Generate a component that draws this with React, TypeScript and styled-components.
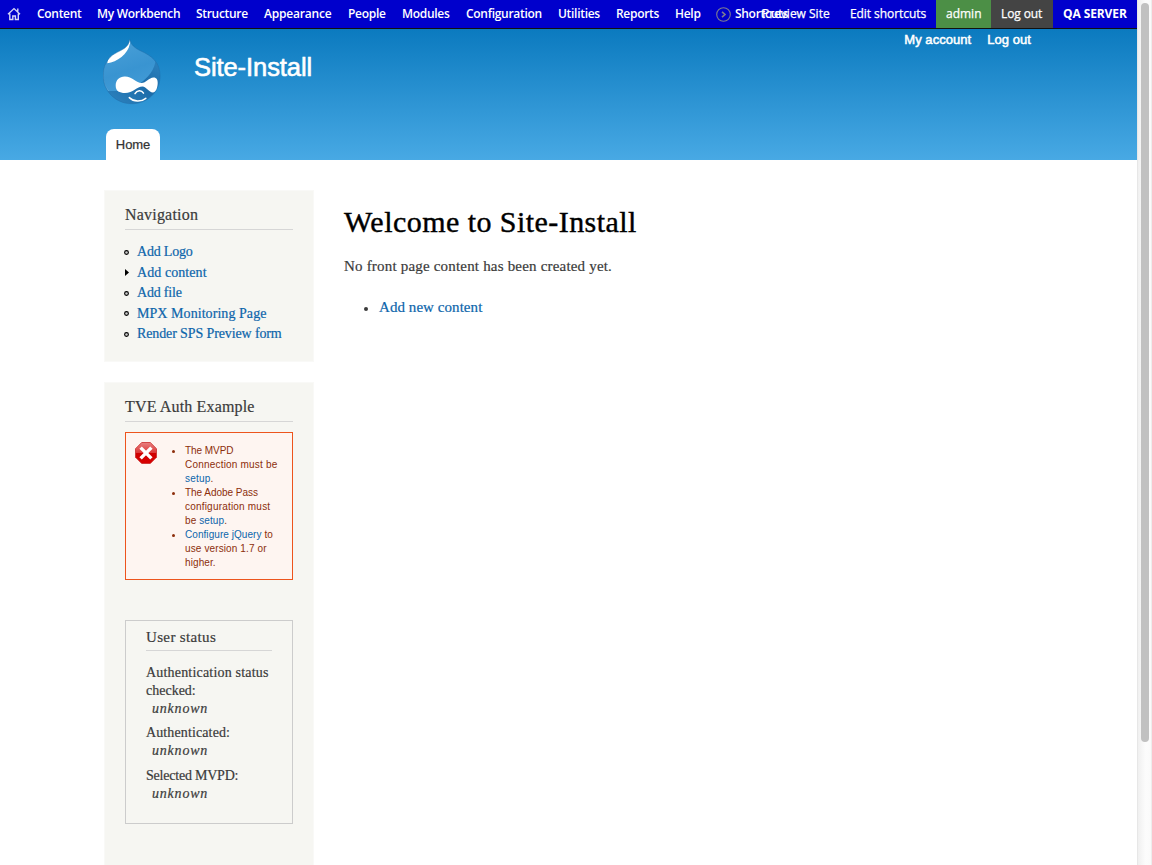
import React from "react";
import styled, { createGlobalStyle } from "styled-components";

const GlobalStyle = createGlobalStyle`
  *, *::before, *::after { box-sizing: border-box; }
  html, body { margin: 0; padding: 0; background: #fff; overflow: hidden; }
  body { font-family: "Liberation Serif", Georgia, serif; color: #3b3b3b; }
  a { color: #0d65ab; text-decoration: none; }
  h1, h2, h3, p, ul, dl, dd, dt { margin: 0; padding: 0; font-weight: normal; }
  ul { list-style: none; }
`;

const Window = styled.div`
  display: flex;
  width: 1152px;
  height: 865px;
  overflow: hidden;
`;

const Page = styled.div`
  width: 1137px;
  height: 865px;
  overflow: hidden;
`;

const ScrollTrack = styled.div`
  width: 15px;
  padding: 3px 3px 0 3px;
  border-left: 1px solid #e7e7e7;
  border-right: 1px solid #ededed;
  background: linear-gradient(to right, #f0f0f0, #fcfcfc 60%, #fafafa);
`;

const ScrollThumb = styled.div`
  width: 8px;
  height: 739px;
  border-radius: 4px;
  background: #c1c1c1;
`;

const Toolbar = styled.nav`
  display: flex;
  height: 29px;
  background: #0000cc;
  border-bottom: 1px solid #111;
  font: 600 12px/27px "Open Sans", sans-serif;
  white-space: nowrap;
`;

const HomeLink = styled.a`
  display: flex;
  flex: none;
  width: 29px;
  padding: 7px 0 0 7px;
`;

const MenuLink = styled.a<{ $w: number; $ls?: number }>`
  flex: none;
  width: ${(p) => p.$w}px;
  padding-left: 8px;
  color: #fff;
  letter-spacing: ${(p) => p.$ls ?? -0.3}px;
`;

const ShortcutToggle = styled.a`
  display: flex;
  flex: none;
  width: 42px;
  padding-left: 6px;
  gap: 4px;
  color: #fff;
  letter-spacing: -0.3px;
  svg { flex: none; margin-top: 7px; }
`;

const UserLink = styled.a<{ $w: number; $bg?: string; $strong?: boolean; $ls?: number }>`
  flex: none;
  width: ${(p) => p.$w}px;
  height: 28px;
  padding-left: 10px;
  color: #fff;
  background: ${(p) => p.$bg ?? "transparent"};
  font-weight: ${(p) => (p.$strong ? 700 : 500)};
  -webkit-text-stroke: ${(p) => (p.$strong ? 0 : 0.25)}px #fff;
  letter-spacing: ${(p) => p.$ls ?? 0}px;
`;

const Header = styled.header`
  height: 131px;
  padding: 0 106px 0 103px;
  display: grid;
  grid-template-columns: 91px 1fr auto;
  grid-template-rows: 100px 31px;
  background: linear-gradient(#0b7abf, #48a9e4);
  font-family: "Liberation Sans", Helvetica, sans-serif;
`;

const LogoLink = styled.a`
  padding-top: 10px;
`;

const SiteName = styled.h1`
  padding-top: 23px;
  font-size: 25.5px;
  line-height: 30px;
  letter-spacing: -0.08px;
  color: #fff;
  -webkit-text-stroke: 0.6px #fff;
`;

const AccountLinks = styled.div`
  display: flex;
  gap: 16px;
  padding-top: 3px;
  font-size: 13px;
  line-height: 16px;
  letter-spacing: 0.05px;
  a { color: #fff; -webkit-text-stroke: 0.5px #fff; }
`;

const HomeTab = styled.a`
  width: 54px;
  height: 31px;
  margin-left: 3px;
  border-radius: 8px 8px 0 0;
  background: #fff;
  color: #333;
  font-size: 13px;
  line-height: 31px;
  letter-spacing: -0.1px;
  text-align: center;
  text-shadow: 0 1px #eee;
  -webkit-text-stroke: 0.2px #333;
`;

const Main = styled.main`
  display: flex;
  padding: 30px 0 0 104px;
  -webkit-text-stroke: 0.2px;
`;

const Sidebar = styled.aside`
  display: flex;
  flex-direction: column;
  gap: 20px;
  width: 210px;
`;

const Block = styled.section<{ $h: number }>`
  height: ${(p) => p.$h}px;
  padding: 13px 20px 0;
  border: 1px solid #f9f9f7;
  background: #f6f6f2;
`;

const BlockTitle = styled.h2<{ $ls?: number }>`
  height: 26px;
  border-bottom: 1px solid #d6d6d6;
  font-size: 16px;
  line-height: 22px;
  letter-spacing: ${(p) => p.$ls ?? 0}px;
`;

const NavList = styled.ul`
  padding-top: 12px;
`;

const NavItem = styled.li`
  display: flex;
  align-items: center;
  gap: 8px;
  height: 20.5px;
  margin-left: -1px;
  svg { flex: none; }
`;

const NavLink = styled.a<{ $ls?: number }>`
  font-size: 14px;
  line-height: 20px;
  white-space: nowrap;
  letter-spacing: ${(p) => p.$ls ?? 0}px;
`;

const ErrorBox = styled.div`
  display: flex;
  height: 148px;
  margin-top: 10px;
  padding: 9px 0 0 9px;
  border: 1px solid #ed541d;
  background: #fef5f1;
  color: #8c2e0b;
  font-family: "Liberation Sans", Helvetica, sans-serif;
  -webkit-text-stroke: 0;
`;

const ErrorList = styled.ul`
  padding: 2px 0 0 28px;
`;

const ErrorItem = styled.li`
  position: relative;
  font-size: 10px;
  line-height: 14px;
  white-space: nowrap;
  &::before {
    content: "";
    position: absolute;
    left: -13px;
    top: 6px;
    width: 3px;
    height: 3px;
    border-radius: 50%;
    background: #8c2e0b;
  }
`;

const ErrorLine = styled.span<{ $ls?: number }>`
  display: block;
  letter-spacing: ${(p) => p.$ls ?? 0.2}px;
`;

const StatusBox = styled.div`
  height: 204px;
  margin-top: 40px;
  padding: 6px 20px 0;
  border: 1px solid #ccc;
`;

const StatusTitle = styled.h3`
  height: 24px;
  border-bottom: 1px solid #d6d6d6;
  font-size: 15px;
  line-height: 21px;
  letter-spacing: 0.35px;
`;

const StatusList = styled.dl`
  padding-top: 13px;
  font-size: 14px;
  line-height: 18px;
`;

const Term = styled.dt<{ $ls?: number }>`
  white-space: nowrap;
  letter-spacing: ${(p) => p.$ls ?? 0}px;
`;

const Value = styled.dd`
  margin: 0 0 6.4px 6px;
  font-style: italic;
  letter-spacing: 0.8px;
`;

const Content = styled.article`
  padding: 14px 0 0 30px;
`;

const PageTitle = styled.h1`
  color: #000;
  font-size: 30px;
  line-height: 36px;
  letter-spacing: 0.45px;
  -webkit-text-stroke: 0.4px #000;
`;

const Paragraph = styled.p`
  padding-top: 16px;
  font-size: 15px;
  line-height: 21px;
  letter-spacing: 0.19px;
`;

const ContentList = styled.ul`
  padding: 20px 0 0 20px;
`;

const ContentItem = styled.li`
  display: flex;
  align-items: center;
  gap: 11px;
  font-size: 15px;
  line-height: 21px;
  letter-spacing: 0.06px;
  &::before {
    content: "";
    width: 4px;
    height: 4px;
    margin-top: 2px;
    border-radius: 50%;
    background: #3b3b3b;
  }
`;

const menu: { label: string; w: number; ls?: number }[] = [
  { label: "Content", w: 60 },
  { label: "My Workbench", w: 99 },
  { label: "Structure", w: 68 },
  { label: "Appearance", w: 84, ls: -0.2 },
  { label: "People", w: 54 },
  { label: "Modules", w: 64 },
  { label: "Configuration", w: 92 },
  { label: "Utilities", w: 58 },
  { label: "Reports", w: 59 },
  { label: "Help", w: 43 },
];

const navigation: { label: string; expandable?: boolean; ls?: number }[] = [
  { label: "Add Logo", ls: -0.2 },
  { label: "Add content", expandable: true, ls: 0.07 },
  { label: "Add file", ls: -0.2 },
  { label: "MPX Monitoring Page", ls: 0.06 },
  { label: "Render SPS Preview form", ls: -0.12 },
];

const HomeIcon = () => (
  <svg width="14" height="14" viewBox="0 0 14 14" fill="none" stroke="#d5d5f5" strokeWidth="1.4">
    <path d="M1 7.3 7 1.6l6 5.7M2.8 6.5v6h3V9h2.6v3.5h2.9v-6M10.8 4.5V1.500" />
  </svg>
);

const ToggleIcon = () => (
  <svg width="15" height="15" viewBox="0 0 15 15" fill="none" stroke="#7c7c91">
    <circle cx="7.5" cy="7.5" r="6.8" strokeWidth="1.1" />
    <path d="m6 4.8 3 2.700-3 2.700" strokeWidth="1.6" />
  </svg>
);

const LeafIcon = () => (
  <svg width="5" height="5" viewBox="0 0 5 5">
    <circle cx="2.5" cy="2.5" r="1.9" fill="#ccc" stroke="#000" strokeWidth="1.1" />
  </svg>
);

const CollapsedIcon = () => (
  <svg width="5" height="7" viewBox="0 0 5 7">
    <path d="M1 0v7l4-3.5z" fill="#000" />
  </svg>
);

const ErrorIcon = () => (
  <svg width="22" height="22" viewBox="0 0 22 22">
    <defs>
      <linearGradient id="stop" x2="0" y2="1">
        <stop offset="0" stopColor="#e88080" />
        <stop offset=".48" stopColor="#dc3a3a" />
        <stop offset=".52" stopColor="#cf0000" />
        <stop offset="1" stopColor="#d80000" />
      </linearGradient>
    </defs>
    <path d="M6.700.5h8.600l6.200 6.200v8.600l-6.200 6.200H6.700L.5 15.300V6.700z" fill="url(#stop)" stroke="#c92b2b" strokeWidth=".8" />
    <path d="m5.600 5.600 10.800 10.800m0-10.800L5.600 16.400" stroke="#fff" strokeWidth="3.4" />
  </svg>
);

const outline =
  "M34.7 9.500C36 15 40 18 45 20.500C57 26 65 32 65 46C65 62 52.500 73.700 36.600 73.700C20.500 73.700 8.300 61 8.300 46C8.300 36 12 28 20 23.500C27 19.500 33.600 18 34.700 9.500z";

const DropLogo = () => (
  <svg width="58" height="66" viewBox="8 9 58 66">
    <defs>
      <linearGradient id="drop" x1=".2" y1="0" x2=".5" y2="1">
        <stop offset="0" stopColor="#4aa0d8" />
        <stop offset=".5" stopColor="#3994d1" />
        <stop offset="1" stopColor="#48a0da" />
      </linearGradient>
      <linearGradient id="shade" x1="1" y1="0" x2="0" y2="1">
        <stop offset="0" stopColor="#2e84c1" />
        <stop offset=".45" stopColor="#1d6ca9" />
        <stop offset="1" stopColor="#2f86c2" />
      </linearGradient>
      <clipPath id="dropClip">
        <path d={outline} />
      </clipPath>
    </defs>
    <g clipPath="url(#dropClip)">
      <path d="M8 9h58v66H8z" fill="url(#drop)" />
      <path d="M61 28C60 40 53 48 44 54L30 61H8v14h58V28z" fill="url(#shade)" />
      <path d="M12 30C7 44 8 54 14 61H8V30z" fill="#7dbde8" opacity=".5" />
      <path d="M34.700 8C29.500 12 33 15.500 23 20.500C16 24 13 28 12.300 33.300C22 32 33 24 34.800 14C35.400 13 35.700 11 34.700 8z" fill="#fff" />
    </g>
    <path d={outline} fill="none" stroke="#1a6ca8" strokeWidth=".7" opacity=".75" />
    <path d="M20.700 56c-.2-6 4-9.600 9.300-9.400 7 .2 11.500 6.400 16.500 6.400 4.500 0 7.500-5.600 12-5.600 3.200 0 4.300 2.300 4.200 5.600-.1 5-2 9.500-4.800 9.500-4 0-6.600-6-10.400-6-5.500 0-9.500 6.500-17.500 6.500-5.500 0-9.200-2-9.300-7z" fill="#fff" />
    <g fill="none" stroke="#fff" strokeWidth="1.500" strokeLinecap="round">
      <path d="M40 63.600c2-3.600 6.500-3.800 8.500-.5" />
      <path d="M34.300 67.600c4.500 4.400 12 4.400 16.500.7" />
    </g>
  </svg>
);

export default function App() {
  return (
    <>
      <GlobalStyle />
      <Window>
        <Page>
          <Toolbar>
            <HomeLink href="#"><HomeIcon /></HomeLink>
            {menu.map((m) => (
              <MenuLink key={m.label} href="#" $w={m.w} $ls={m.ls}>{m.label}</MenuLink>
            ))}
            <ShortcutToggle href="#"><ToggleIcon />Shortcuts</ShortcutToggle>
            <UserLink href="#" $w={88}>Preview Site</UserLink>
            <UserLink href="#" $w={96} $ls={-0.07}>Edit shortcuts</UserLink>
            <UserLink href="#" $w={55} $bg="#4c8f46">admin</UserLink>
            <UserLink href="#" $w={62} $bg="#444" $ls={-0.1}>Log out</UserLink>
            <UserLink href="#" $w={84} $strong $ls={-0.1}>QA SERVER</UserLink>
          </Toolbar>
          <Header>
            <LogoLink href="#"><DropLogo /></LogoLink>
            <SiteName>Site-Install</SiteName>
            <AccountLinks>
              <a href="#">My account</a>
              <a href="#">Log out</a>
            </AccountLinks>
            <HomeTab href="#">Home</HomeTab>
          </Header>
          <Main>
            <Sidebar>
              <Block $h={172}>
                <BlockTitle $ls={0.2}>Navigation</BlockTitle>
                <NavList>
                  {navigation.map((n) => (
                    <NavItem key={n.label}>
                      {n.expandable ? <CollapsedIcon /> : <LeafIcon />}
                      <NavLink href="#" $ls={n.ls}>{n.label}</NavLink>
                    </NavItem>
                  ))}
                </NavList>
              </Block>
              <Block $h={500}>
                <BlockTitle $ls={0.15}>TVE Auth Example</BlockTitle>
                <ErrorBox>
                  <ErrorIcon />
                  <ErrorList>
                    <ErrorItem>
                      <ErrorLine $ls={-0.05}>The MVPD</ErrorLine>
                      <ErrorLine>Connection must be</ErrorLine>
                      <ErrorLine><a href="#">setup</a>.</ErrorLine>
                    </ErrorItem>
                    <ErrorItem>
                      <ErrorLine $ls={-0.03}>The Adobe Pass</ErrorLine>
                      <ErrorLine>configuration must</ErrorLine>
                      <ErrorLine $ls={0.1}>be <a href="#">setup</a>.</ErrorLine>
                    </ErrorItem>
                    <ErrorItem>
                      <ErrorLine $ls={0.06}><a href="#">Configure jQuery</a> to</ErrorLine>
                      <ErrorLine $ls={0.12}>use version 1.7 or</ErrorLine>
                      <ErrorLine $ls={0.1}>higher.</ErrorLine>
                    </ErrorItem>
                  </ErrorList>
                </ErrorBox>
                <StatusBox>
                  <StatusTitle>User status</StatusTitle>
                  <StatusList>
                    <Term $ls={0.19}>Authentication status</Term>
                    <Term>checked:</Term>
                    <Value>unknown</Value>
                    <Term $ls={0.12}>Authenticated:</Term>
                    <Value>unknown</Value>
                    <Term $ls={-0.22}>Selected MVPD:</Term>
                    <Value>unknown</Value>
                  </StatusList>
                </StatusBox>
              </Block>
            </Sidebar>
            <Content>
              <PageTitle>Welcome to Site-Install</PageTitle>
              <Paragraph>No front page content has been created yet.</Paragraph>
              <ContentList>
                <ContentItem><a href="#">Add new content</a></ContentItem>
              </ContentList>
            </Content>
          </Main>
        </Page>
        <ScrollTrack><ScrollThumb /></ScrollTrack>
      </Window>
    </>
  );
}
